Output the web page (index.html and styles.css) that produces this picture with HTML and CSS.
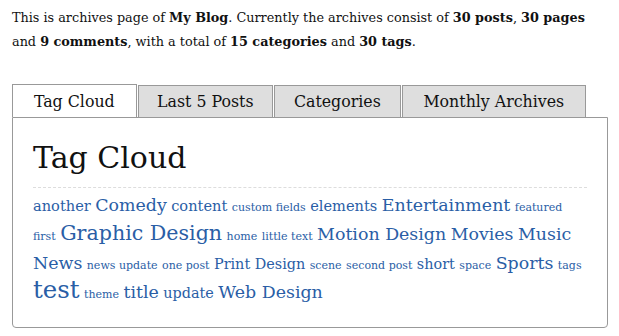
FILE: index.html
```html
<!DOCTYPE html>
<html lang="en">
<head>
    <meta charset="UTF-8">
    <meta name="viewport" content="width=device-width, initial-scale=1.0">
    <title>Archives - My Blog</title>
    <link rel="stylesheet" href="styles.css">
</head>
<body>
    <div class="page">
        <p class="intro">This is archives page of <strong>My Blog</strong>. Currently the archives consist of <strong>30 posts</strong>, <strong>30 pages</strong> and <strong>9 comments</strong>, with a total of <strong>15 categories</strong> and <strong>30 tags</strong>.</p>

        <div class="tabs">
            <ul class="tab-nav">
                <li class="tab active"><a href="#tag-cloud">Tag Cloud</a></li>
                <li class="tab"><a href="#last-posts">Last 5 Posts</a></li>
                <li class="tab"><a href="#categories">Categories</a></li>
                <li class="tab"><a href="#monthly">Monthly Archives</a></li>
            </ul>
            <div class="tab-panel" id="tag-cloud">
                <h2>Tag Cloud</h2>
                <div class="cloud">
                    <a href="#" class="t3">another</a>
                    <a href="#" class="t5">Comedy</a>
                    <a href="#" class="t3">content</a>
                    <a href="#" class="t1">custom fields</a>
                    <a href="#" class="t3">elements</a>
                    <a href="#" class="t5">Entertainment</a>
                    <a href="#" class="t1">featured</a>
                    <a href="#" class="t1">first</a>
                    <a href="#" class="t6">Graphic Design</a>
                    <a href="#" class="t1">home</a>
                    <a href="#" class="t1">little text</a>
                    <a href="#" class="t5">Motion Design</a>
                    <a href="#" class="t5">Movies</a>
                    <a href="#" class="t5">Music</a>
                    <a href="#" class="t5">News</a>
                    <a href="#" class="t1">news update</a>
                    <a href="#" class="t1">one post</a>
                    <a href="#" class="t4">Print Design</a>
                    <a href="#" class="t1">scene</a>
                    <a href="#" class="t1">second post</a>
                    <a href="#" class="t4">short</a>
                    <a href="#" class="t1">space</a>
                    <a href="#" class="t5">Sports</a>
                    <a href="#" class="t1">tags</a>
                    <a href="#" class="t7">test</a>
                    <a href="#" class="t1">theme</a>
                    <a href="#" class="t5">title</a>
                    <a href="#" class="t4">update</a>
                    <a href="#" class="t5">Web Design</a>
                </div>
            </div>
        </div>
    </div>
</body>
</html>
```

FILE: styles.css
```css
* {
    margin: 0;
    padding: 0;
    box-sizing: border-box;
}

body {
    background-color: #fff;
    color: #111;
    font-family: "DejaVu Serif", Georgia, serif;
}

.page {
    width: 596px;
    margin-left: 12px;
    padding-top: 6px;
}

.intro {
    font-size: 12.8px;
    line-height: 24px;
    padding-right: 8px;
}

.intro strong {
    font-weight: bold;
}

.tabs {
    margin-top: 30px;
}

.tab-nav {
    display: flex;
    list-style: none;
    padding-right: 21px;
}

.tab {
    border: 1px solid #999;
    border-bottom: 0;
    background-color: #dedede;
    height: 32px;
    margin-top: 1px;
    margin-right: 1px;
    display: flex;
    align-items: center;
    justify-content: center;
    font-size: 15.8px;
}

.tab:nth-child(1) { width: 125px; }
.tab:nth-child(2) { width: 136px; }
.tab:nth-child(3) { width: 127px; }
.tab:nth-child(4) { width: 185px; }

.tab a {
    color: #111;
    text-decoration: none;
}

.tab.active {
    background-color: #fff;
    margin-top: 0;
    height: 33px;
    margin-bottom: -1px;
    position: relative;
    z-index: 1;
}

.tab-panel {
    border: 1px solid #999;
    border-radius: 0 0 4px 4px;
    height: 211px;
    padding: 0 20px;
}

.tab-panel h2 {
    font-weight: normal;
    font-size: 30px;
    line-height: 40px;
    padding-top: 20px;
    padding-bottom: 9px;
    border-bottom: 1px dashed #ddd;
    color: #111;
}

.cloud {
    font-size: 14px;
    line-height: 29px;
    padding-top: 4px;
}

.cloud a {
    color: #2a5ea6;
    text-decoration: none;
    line-height: 0;
}

.t1 { font-size: 11px; }
.t3 { font-size: 14.6px; }
.t4 { font-size: 14.4px; }
.t5 { font-size: 17.4px; }
.t6 { font-size: 20.6px; }
.t7 { font-size: 24.4px; }
```
